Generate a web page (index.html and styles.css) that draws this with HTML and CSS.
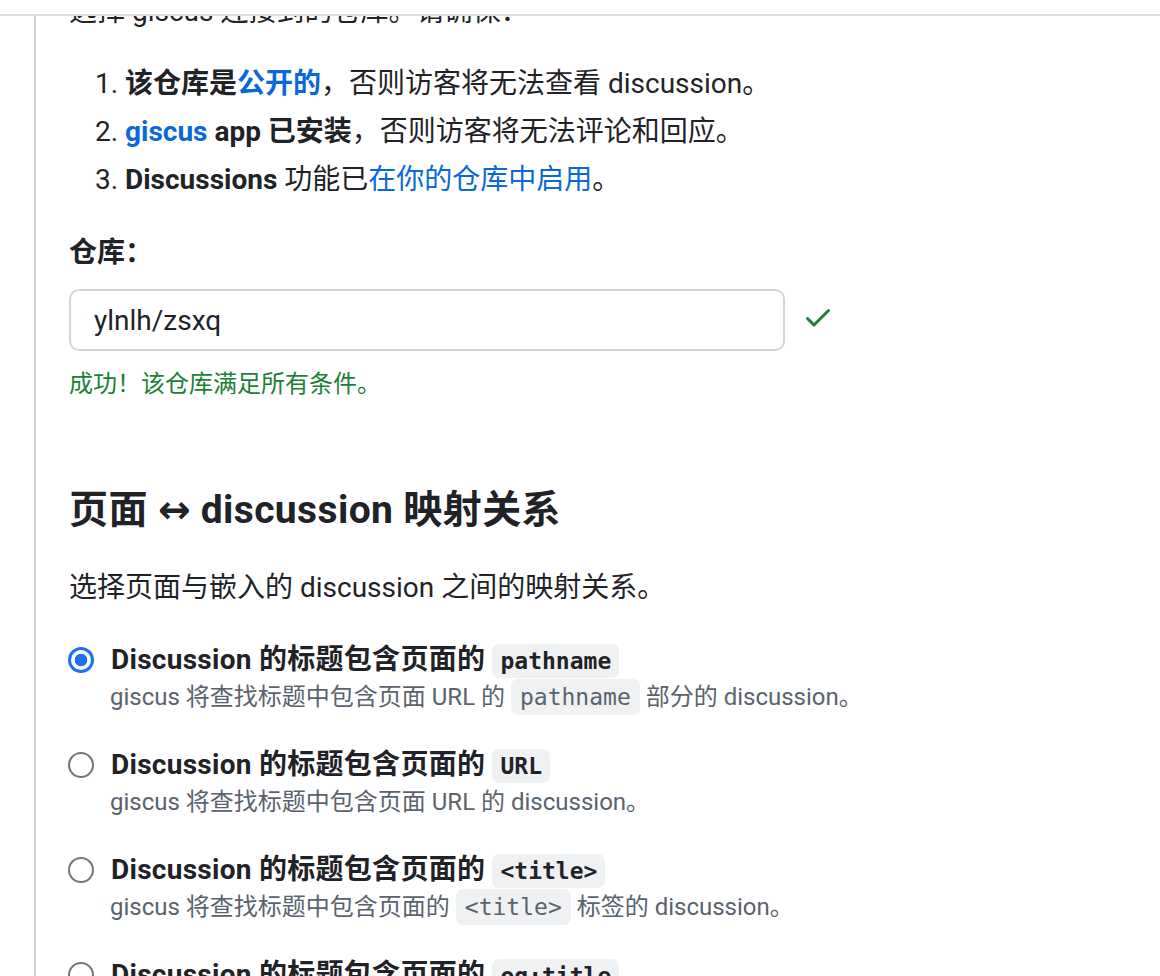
FILE: index.html
```html
<!DOCTYPE html>
<html lang="zh-CN">
<head>
<meta charset="utf-8">
<title>giscus</title>
<link rel="stylesheet" href="styles.css">
</head>
<body>
<header class="topbar"></header>
<main class="content">
  <p class="intro">选择 giscus 连接到的仓库。请确保：</p>
  <ol class="reqs">
    <li><strong>该仓库是<a href="#">公开的</a></strong>，否则访客将无法查看 discussion。</li>
    <li><strong><a href="#">giscus</a> app 已安装</strong>，否则访客将无法评论和回应。</li>
    <li><strong>Discussions</strong> 功能已<a href="#">在你的仓库中启用</a>。</li>
  </ol>
  <label class="field-label" for="repo">仓库：</label>
  <div class="input-row">
    <input id="repo" class="repo-input" type="text" value="ylnlh/zsxq">
    <svg class="check" width="32" height="32" viewBox="0 0 16 16" aria-hidden="true"><path fill="currentColor" d="M13.78 4.22a.75.75 0 0 1 0 1.06l-7.25 7.25a.75.75 0 0 1-1.06 0L2.22 9.28a.751.751 0 0 1 .018-1.042.751.751 0 0 1 1.042-.018L6 10.94l6.72-6.72a.75.75 0 0 1 1.06 0Z"/></svg>
  </div>
  <p class="success">成功！该仓库满足所有条件。</p>

  <h2 class="section-title">页面 <span class="arrow">↔</span> discussion 映射关系</h2>
  <p class="section-desc">选择页面与嵌入的 discussion 之间的映射关系。</p>

  <div class="options">
    <div class="option">
      <span class="radio checked"></span>
      <div class="opt-title">Discussion 的标题包含页面的 <code>pathname</code></div>
      <div class="opt-desc">giscus 将查找标题中包含页面 URL 的 <code>pathname</code> 部分的 discussion。</div>
    </div>
    <div class="option">
      <span class="radio"></span>
      <div class="opt-title">Discussion 的标题包含页面的 <code>URL</code></div>
      <div class="opt-desc">giscus 将查找标题中包含页面 URL 的 discussion。</div>
    </div>
    <div class="option">
      <span class="radio"></span>
      <div class="opt-title">Discussion 的标题包含页面的 <code>&lt;title&gt;</code></div>
      <div class="opt-desc">giscus 将查找标题中包含页面的 <code>&lt;title&gt;</code> 标签的 discussion。</div>
    </div>
    <div class="option">
      <span class="radio"></span>
      <div class="opt-title">Discussion 的标题包含页面的 <code>og:title</code></div>
      <div class="opt-desc">giscus 将查找标题中包含页面的 <code>&lt;meta property="og:title"&gt;</code> 标签的 discussion。</div>
    </div>
  </div>
</main>
</body>
</html>
```

FILE: styles.css
```css
html, body {
  margin: 0;
  padding: 0;
  overflow: hidden;
  background: #ffffff;
}

body {
  font-family: Roboto, "Noto Sans CJK SC", sans-serif;
  color: #1f2328;
  font-size: 28px;
  line-height: 42px;
}

.topbar {
  position: fixed;
  top: 0;
  left: 0;
  right: 0;
  height: 14px;
  background: #ffffff;
  border-bottom: 2px solid #dddddd;
  z-index: 10;
}

.content {
  margin-left: 34px;
  border-left: 2px solid #d0d7de;
  padding-left: 33px;
  min-height: 1200px;
}

.intro {
  margin: -9px 0 0;
}

a {
  color: #0969da;
  text-decoration: none;
}

strong {
  font-weight: 700;
}

.reqs {
  margin: 30px 0 0;
  padding-left: 56px;
}

.reqs li + li {
  margin-top: 6px;
}

.field-label {
  display: block;
  margin-top: 31px;
  font-weight: 700;
}

.input-row {
  display: flex;
  align-items: center;
  gap: 17px;
  margin-top: 15px;
}

.repo-input {
  box-sizing: border-box;
  width: 716px;
  height: 62px;
  border: 2px solid #d0d7de;
  border-radius: 10px;
  padding: 0 23px;
  font-family: Roboto, "Noto Sans CJK SC", sans-serif;
  font-size: 28px;
  color: #1f2328;
  background: #ffffff;
  outline: none;
}

.check {
  color: #1a7f37;
  margin-top: -6px;
}

.success {
  margin: 15px 0 0;
  font-size: 24px;
  line-height: 36px;
  color: #1a7f37;
}

.section-title {
  margin: 84px 0 0;
  font-size: 39px;
  line-height: 48px;
  font-weight: 700;
  letter-spacing: 0.01em;
}

.arrow {
  font-family: "DejaVu Sans", sans-serif;
  letter-spacing: 0;
}

.section-desc {
  margin: 33px 0 0;
}

.options {
  margin-top: 32px;
  display: flex;
  flex-direction: column;
  gap: 31px;
}

.option {
  display: grid;
  grid-template-columns: 26px 1fr;
  column-gap: 16px;
  margin-left: -1px;
}

.radio {
  grid-row: 1;
  grid-column: 1;
  align-self: center;
  box-sizing: border-box;
  width: 26px;
  height: 26px;
  border-radius: 50%;
  border: 2px solid #767676;
  background: #ffffff;
}

.radio.checked {
  border: 3px solid #1d72f0;
  background: radial-gradient(circle, #1d72f0 0 6px, #ffffff 6.6px);
}

.opt-title {
  grid-row: 1;
  grid-column: 2;
  font-weight: 700;
  line-height: 38px;
  margin-left: 1px;
  letter-spacing: 0.01em;
}

.opt-desc {
  grid-row: 2;
  grid-column: 2;
  font-size: 24px;
  line-height: 36px;
  color: #59636e;
}

code {
  font-family: "DejaVu Sans Mono", "Liberation Mono", monospace;
  font-size: 23px;
  line-height: 1;
  letter-spacing: 0;
  background: #eff1f3;
  border-radius: 7px;
  padding: 4px 8px;
}

.opt-title code {
  font-weight: 700;
  color: #1f2328;
}

.opt-desc code {
  padding: 5px 9px;
  color: #59636e;
}
```
